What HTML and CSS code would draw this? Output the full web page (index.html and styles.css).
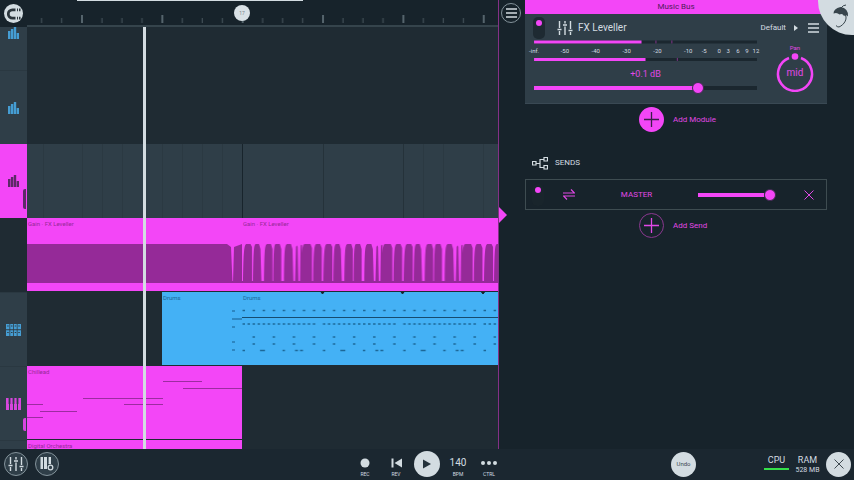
FILE: index.html
```html
<!DOCTYPE html>
<html lang="en">
    <head>
        <meta charset="UTF-8">
        <meta name="viewport" content="width=device-width, initial-scale=1.0">
        <title>Music Bus</title>
        <link rel="stylesheet" href="styles.css">
    </head>
    <body>
        <!-- Shapes used more than once -->
        <svg class="defs" aria-hidden="true">
            <symbol id="levels" viewBox="0 0 11 12">
                <path d="M0 4h2.400v8H0zM2.900 2h2.400v10H2.900zM5.800 0h2.400v12H5.800zM8.700 6H11v6H8.700z"/>
            </symbol>
            <symbol id="faders" viewBox="0 0 16 14">
                <path d="M2.500 0v7M2.500 10v4M8 0v2.500M8 5.500V14M13.500 0v8M13.500 11v3M0.500 8.500h4M6 4h4M11.500 9.500h4" fill="none" stroke="currentColor" stroke-width="1.400"/>
            </symbol>
            <symbol id="menu" viewBox="0 0 11 10">
                <path d="M0 1h11M0 5h11M0 9h11" stroke="currentColor" stroke-width="1.400"/>
            </symbol>
            <symbol id="plus" viewBox="0 0 15 15">
                <path d="M7.500 0v15M0 7.500h15" stroke="currentColor" stroke-width="1.300"/>
            </symbol>
            <symbol id="cross" viewBox="0 0 10 10">
                <path d="M0.500 0.500l9 9M9.500 0.500l-9 9" stroke="currentColor"/>
            </symbol>
        </svg>

        <div class="app">
            <main class="playlist">
                <div class="ruler">
                    <button type="button" class="snap" aria-label="Snap">
                        <svg width="14" height="12" viewBox="0 0 14 12">
                            <path d="M8.500 1.800H5.500a4.200 4.200 0 0 0 0 8.400h3" fill="none" stroke="#2b353c" stroke-width="2.800"/>
                            <path d="M10 .4h1v2.800h-1zM10 8.800h1v2.800h-1zM12 .4h1.500v2.800H12zM12 8.800h1.500v2.800H12z" fill="#2b353c"/>
                        </svg>
                    </button>
                    <svg class="ticks" height="27">
                        <defs>
                            <pattern id="bars" x="54" width="80.350" height="27" patternUnits="userSpaceOnUse">
                                <path d="M1 15v8" stroke="#55646c" stroke-width="2"/>
                                <path d="M21 18v5M41 18v5M61 18v5" stroke="#3d4b53" stroke-width="1.300"/>
                            </pattern>
                        </defs>
                        <rect width="100%" height="27" fill="url(#bars)"/>
                    </svg>
                    <span class="scroll"></span>
                    <span class="marker">17</span>
                </div>

                <div class="tracks">
                    <div class="track first">
                        <div class="head blue"><svg width="11" height="12"><use href="#levels"/></svg></div>
                        <div class="lane"></div>
                    </div>
                    <div class="track">
                        <div class="head blue"><svg width="11" height="12"><use href="#levels"/></svg></div>
                        <div class="lane"></div>
                    </div>
                    <div class="track">
                        <div class="head selected">
                            <svg width="11" height="12"><use href="#levels"/></svg>
                            <span class="peak"></span>
                        </div>
                        <div class="lane light">
                            <svg width="100%" height="74">
                                <path d="M16.500 0v74M55.500 0v74M75.500 0v74M95.500 0v74M135.500 0v74M155.500 0v74M175.500 0v74M195.500 0v74M396.500 0v74M416.500 0v74M456.500 0v74" stroke="#2b3942"/>
                                <path d="M296.500 0v74M376.500 0v74" stroke="#25323a"/>
                                <path d="M215.500 0v74" stroke="#18242c"/>
                            </svg>
                        </div>
                    </div>
                    <div class="track">
                        <div class="head empty"></div>
                        <div class="lane">
                            <div class="clip pink wide">
                                <span>Gain · FX Leveller</span>
                                <svg width="100%" height="39">
                                    <path d="M0 0h200l4 3 1.500 36H0zM206 39l1-36 8-3v39z"/>
                                    <path d="M0 37h216v2H0z"/>
                                </svg>
                            </div>
                            <div class="clip pink rest">
                                <span>Gain · FX Leveller</span>
                                <svg width="100%" height="39">
                                    <defs>
                                        <pattern id="duck" width="80.350" height="39" patternUnits="userSpaceOnUse">
                                            <path d="M1 39C1.500 8 2 0 4.500 0h4L10 3v36zM11 39c.5-31 .5-39 3-39h3l1.500 5 1 34zM22 39c.5-31 .5-38 3-39h4l1.500 5v34zM31.300 39c.3-31 .5-39 2.500-39h4l1.500 5v34zM42 39c.3-31 .5-38 3-39h4l1.500 5 1 34zM53 39l1-36q1-3 1.700 0l.8 36zM58 39l.5-36q.2-3 1.500-2l-.5 38zM59 39c.5-31 1-38 3.500-39h6l1.500 4v35zM71.200 39c.3-31 .8-38 3-39h4l1.600 4v35z"/>
                                            <path d="M0 37h81v2H0z"/>
                                        </pattern>
                                    </defs>
                                    <rect width="100%" height="39" fill="url(#duck)"/>
                                </svg>
                            </div>
                        </div>
                    </div>
                    <div class="track">
                        <div class="head blue">
                            <svg width="15" height="12" viewBox="0 0 15 12">
                                <path d="M0 0h15v5.300H0zM0 6.300h15V12H0z"/>
                                <path d="M3.800 0v12M7.500 0v12M11.200 0v12" stroke="#2f3e48" stroke-width=".8"/>
                                <path d="M1.200 2h1.500M5 2h1.500M8.700 2h1.500M12.300 2h1.500M1.200 8.500h1.500M5 8.500h1.500M8.700 8.500h1.500M12.300 8.500h1.500" stroke="#2f3e48" stroke-width="1"/>
                            </svg>
                        </div>
                        <div class="lane">
                            <div class="clip azure bar4">
                                <span>Drums</span>
                                <svg width="80" height="73">
                                    <path d="M70 19h3M70 27h10M70 35h3M70 50h3M70 58h3" stroke="#175d8d"/>
                                </svg>
                            </div>
                            <div class="clip azure rest">
                                <span>Drums</span>
                                <svg width="100%" height="73">
                                    <defs>
                                        <pattern id="beat" width="80.350" height="73" patternUnits="userSpaceOnUse">
                                            <g stroke="#1c6797" stroke-width="1.300">
                                                <path d="M.5 18.500H80" stroke-dasharray="2.500 7.550"/>
                                                <path d="M.5 32H74" stroke-dasharray="2.500 2.520"/>
                                                <path d="M10.500 45H80" stroke-dasharray="2.500 17.600"/>
                                                <path d="M10.500 52H80" stroke-dasharray="2.500 17.600"/>
                                                <path d="M.5 58.500H3M18 58.500h5M40.500 58.500H43M53 58.500h3M58 58.500h3"/>
                                            </g>
                                        </pattern>
                                    </defs>
                                    <rect width="100%" height="73" fill="url(#beat)"/>
                                    <path d="M0 25.500h2000" stroke="#164c70"/>
                                    <path d="M79 0h3l-1.500 2zM159 0h3l-1.500 2zM239.500 0h3l-1.500 2z" fill="#17232b" stroke="#17232b"/>
                                </svg>
                            </div>
                        </div>
                    </div>
                    <div class="track">
                        <div class="head rose">
                            <svg width="15" height="12" viewBox="0 0 15 12">
                                <path d="M0 0h3v12H0zM4 0h3v12H4zM8 0h3v12H8zM12 0h3v12h-3z"/>
                                <path d="M3.500 0v6M7.500 0v6M11.500 0v6" stroke="#2f3e48" stroke-width="1.800"/>
                            </svg>
                            <span class="peak"></span>
                        </div>
                        <div class="lane">
                            <div class="clip pink wide">
                                <span>Chillead</span>
                                <svg width="215" height="73">
                                    <path d="M136 15.500h39M156 22.500h59M56 32.500h80M0 38.500h16M97 38.500h39M13 45.500h37M0 51.500h16" stroke="#9c2ca0"/>
                                </svg>
                            </div>
                        </div>
                    </div>
                    <div class="track last">
                        <div class="head"></div>
                        <div class="lane">
                            <div class="clip pink wide"><span>Digital Orchestra</span></div>
                        </div>
                    </div>
                    <span class="playhead"></span>
                </div>
            </main>

            <aside class="mixer">
                <span class="pointer"></span>
                <div class="side">
                    <button type="button" class="round outline small" aria-label="Menu"><svg width="11" height="10"><use href="#menu"/></svg></button>
                </div>

                <div class="rack">
                    <h1>Music Bus</h1>
                    <section class="module">
                        <div class="title">
                            <button type="button" class="toggle" aria-label="Bypass"></button>
                            <svg width="16" height="14"><use href="#faders"/></svg>
                            <h2>FX Leveller</h2>
                            <button type="button" class="preset">Default
                                <svg width="4" height="6" viewBox="0 0 4 6"><path d="M0 0l4 3-4 3z"/></svg>
                            </button>
                            <button type="button" aria-label="Module menu"><svg width="11" height="10"><use href="#menu"/></svg></button>
                        </div>
                        <div class="controls">
                            <div class="level">
                                <svg class="meter" viewBox="0 0 224 22">
                                    <path d="M0 2h224M0 19.500h224" stroke="#1b272f" stroke-width="3"/>
                                    <path d="M0 2h108M0 19.500h112" stroke="#f346f7" stroke-width="3"/>
                                    <path d="M122.500 0.500v3M138.500 .5v3M144 18v3" stroke="#84348a"/>
                                    <g text-anchor="middle">
                                        <text x="0" y="13">-inf.</text>
                                        <text x="31" y="13">-50</text>
                                        <text x="62" y="13">-40</text>
                                        <text x="93" y="13">-30</text>
                                        <text x="124" y="13">-20</text>
                                        <text x="155" y="13">-10</text>
                                        <text x="171" y="13">-5</text>
                                        <text x="186" y="13">0</text>
                                        <text x="195" y="13">3</text>
                                        <text x="205" y="13">6</text>
                                        <text x="214" y="13">9</text>
                                        <text x="223" y="13">12</text>
                                    </g>
                                </svg>
                                <label for="gain">+0.1 dB</label>
                                <input type="range" id="gain" class="gain" min="0" max="100" value="75">
                            </div>
                            <div class="pan">
                                <span>Pan</span>
                                <button type="button" aria-label="Pan mid">
                                    <svg width="38" height="40" viewBox="0 0 38 40">
                                        <path d="M25 6A17 17 0 1 1 13 6" fill="none" stroke="#f346f7" stroke-width="2.500"/>
                                        <circle cx="19" cy="4.500" r="3.300" fill="#f346f7"/>
                                        <text x="19" y="24" text-anchor="middle">mid</text>
                                    </svg>
                                </button>
                            </div>
                        </div>
                    </section>

                    <button type="button" class="add">
                        <span class="round filled"><svg width="15" height="15"><use href="#plus"/></svg></span>Add Module
                    </button>

                    <h3>
                        <svg width="16" height="13" viewBox="0 0 16 13">
                            <path d="M.5 4.500h3.500v3.500H.5zM4 6.500h4M12 2.500H8v8h4M12 .5h3.500V4H12zM12 8.500h3.500V12H12z" fill="none" stroke="currentColor" stroke-width="1.200"/>
                        </svg>
                        SENDS
                    </h3>
                    <div class="send">
                        <button type="button" class="toggle off" aria-label="Send on"></button>
                        <svg width="12" height="11" viewBox="0 0 12 11">
                            <path d="M0 4h11.500L8 .5M12 7H.5L4 10.500" fill="none" stroke="currentColor" stroke-width="1.200"/>
                        </svg>
                        <label for="master">MASTER</label>
                        <input type="range" id="master" class="amount" min="0" max="100" value="100">
                        <button type="button" aria-label="Remove send"><svg width="10" height="10"><use href="#cross"/></svg></button>
                    </div>
                    <button type="button" class="add">
                        <span class="round ring"><svg width="15" height="15"><use href="#plus"/></svg></span>Add Send
                    </button>
                </div>
                <svg class="umbrella" width="36" height="35" viewBox="0 0 36 35">
                    <circle cx="34" cy="1" r="34" fill="#d3dce1"/>
                    <path d="M15.500 13.500q0-5 7-6.500 8 1 7.500 9.500-2-2-4-.5-1.500-3-4.500-1.500-2.500-2.500-6-1z" fill="#38454c"/>
                    <path d="M28 5q-3 0-5 3M26 13c5 5 0 12-5 14q-2 0-3-1.500" fill="none" stroke="#38454c"/>
                </svg>
            </aside>

            <footer>
                <div class="views">
                    <button type="button" class="round outline" aria-label="Mixer"><svg width="16" height="14"><use href="#faders"/></svg></button>
                    <button type="button" class="round outline" aria-label="Instruments">
                        <svg width="14" height="14" viewBox="0 0 14 14">
                            <path d="M.5 0h2.500v12H.5zM4 0h3v12H4zM8.500 0H11v7H8.500z" fill="#d3dce1"/>
                            <path d="M3.500 0v7M7.700 0v6" stroke="#2f3e48" stroke-width="1"/>
                            <circle cx="10.500" cy="10.500" r="3.500" fill="#2f3e48"/>
                            <circle cx="10.500" cy="10.500" r="2.300" fill="none" stroke="#d3dce1" stroke-width="1.300"/>
                        </svg>
                    </button>
                </div>
                <div class="transport">
                    <button type="button">
                        <svg width="10" height="10" viewBox="0 0 10 10"><circle cx="5" cy="5" r="4.500"/></svg>
                        <small>REC</small>
                    </button>
                    <button type="button">
                        <svg width="11" height="10" viewBox="0 0 11 10"><path d="M.5 .5H2.500v9H.5zM11 .5v9L3.500 5z"/></svg>
                        <small>REV</small>
                    </button>
                    <button type="button" class="round play" aria-label="Play">
                        <svg width="8" height="10" viewBox="0 0 8 10"><path d="M0 0.500l8 4.500-8 4.500z"/></svg>
                    </button>
                    <button type="button">
                        <b>140</b>
                        <small>BPM</small>
                    </button>
                    <button type="button">
                        <svg width="16" height="10" viewBox="0 0 16 10"><circle cx="2" cy="5" r="2"/><circle cx="8" cy="5" r="2"/><circle cx="14" cy="5" r="2"/></svg>
                        <small>CTRL</small>
                    </button>
                </div>
                <div class="status">
                    <button type="button" class="round undo">Undo</button>
                    <div class="stat">CPU<span class="load"></span></div>
                    <div class="stat">RAM<span>528 MB</span></div>
                    <button type="button" class="round undo" aria-label="Close"><svg width="10" height="10"><use href="#cross"/></svg></button>
                </div>
            </footer>
        </div>
    </body>
</html>
```
FILE: styles.css
```css
* {
    margin: 0;
    padding: 0;
    box-sizing: border-box;
}
body {
    background-color: #17232b;
    color: #d3dce1;
    font-family: Roboto, "Liberation Sans", sans-serif;
    font-size: 8px;
    line-height: 10px;
    overflow: hidden;
}
button {
    border: none;
    background: none;
    color: inherit;
    font: inherit;
}
svg {
    display: block;
    fill: currentColor;
}
.defs {
    display: none;
}
.app {
    display: grid;
    grid-template-columns: minmax(0, 1fr) 356px;
    grid-template-rows: minmax(0, 1fr) 31px;
    height: 100vh;
}
.round {
    display: flex;
    flex: none;
    align-items: center;
    justify-content: center;
    width: 25px;
    height: 25px;
    border-radius: 50%;
}
.outline {
    width: 24px;
    height: 24px;
    border: 1px solid #83929a;
    background-color: #2f3e48;
}
.small {
    width: 20px;
    height: 20px;
    background: none;
}

/* Playlist */
.playlist {
    display: flex;
    flex-direction: column;
    overflow: hidden;
}
.ruler {
    position: relative;
    display: flex;
    flex: none;
    height: 27px;
}
.snap {
    display: flex;
    flex: none;
    align-items: center;
    justify-content: center;
    width: 19px;
    height: 19px;
    margin: 4px;
    border-radius: 50%;
    background-color: #d3dce1;
}
.ticks {
    flex: 1;
    min-width: 0;
    border-bottom: 2px solid #35444c;
}
.scroll {
    position: absolute;
    top: 0;
    left: 77px;
    width: 226px;
    height: 1px;
    background-color: #d3dce1;
}
.marker {
    position: absolute;
    top: 5px;
    left: 234px;
    width: 16px;
    height: 16px;
    border-radius: 50%;
    background-color: #d9e1e6;
    color: #7b868c;
    font-size: 5px;
    line-height: 16px;
    text-align: center;
}
.tracks {
    position: relative;
    flex: 1;
    min-height: 0;
    overflow: hidden;
    background-color: #1f2b33;
}
.track {
    display: flex;
    height: 74px;
}
.first {
    height: 43px;
}
.first .head {
    align-items: flex-start;
    border-top: none;
}
.head {
    position: relative;
    display: flex;
    flex: none;
    align-items: center;
    justify-content: center;
    width: 27px;
    border-top: 1px solid #2a3841;
    background-color: #2f3e48;
}
.blue {
    color: #459dd3;
}
.rose {
    color: #d746de;
}
.selected {
    border-top: none;
    background-color: #f346f7;
    color: #5c2a67;
}
.empty {
    border-top: none;
    background-color: #1f2b33;
}
.peak {
    position: absolute;
    right: 1px;
    bottom: 9px;
    width: 3px;
    height: 20px;
    border-radius: 2px 0 0 2px;
    background-color: currentColor;
}
.rose .peak {
    height: 13px;
}
.lane {
    display: flex;
    flex: 1;
    min-width: 0;
}
.light {
    background-color: #2f3e48;
}
.clip {
    position: relative;
    flex: none;
    height: 73px;
    overflow: hidden;
}
.clip span {
    position: absolute;
    top: 1px;
    left: 1px;
    font-size: 6px;
}
.wide {
    width: 215px;
}
.bar4 {
    width: 80px;
    margin-left: 135px;
}
.rest {
    flex: 1;
}
.pink {
    background-color: #f346f7;
    color: #952a98;
}
.pink [height="39"] {
    margin-top: 26px;
}
.azure {
    background-color: #44b1f5;
    color: #1c6797;
}
.playhead {
    position: absolute;
    top: 0;
    left: 143px;
    width: 3px;
    height: 100%;
    background-color: #d3dce1;
}

/* Mixer */
.mixer {
    position: relative;
    display: flex;
    padding-right: 27px;
    border-left: 1px solid #843087;
}
.pointer {
    position: absolute;
    top: 207px;
    left: 0;
    border: solid transparent;
    border-width: 8px 0 8px 8px;
    border-left-color: #f346f7;
}
.side {
    width: 26px;
    padding: 3px 2px;
}
.rack {
    flex: 1;
    min-width: 0;
}
h1, h2, h3 {
    font: inherit;
}
h1 {
    height: 14px;
    background-color: #f346f7;
    color: #511b59;
    line-height: 13px;
    text-align: center;
}
.module {
    height: 90px;
    padding: 2px 8px 0;
    border-bottom: 1px solid #3a4954;
    background-color: #2f3e48;
}
.title {
    display: flex;
    align-items: center;
    height: 23px;
}
.toggle {
    width: 12px;
    height: 22px;
    margin-right: 12px;
    padding: 3px;
    border-radius: 5px;
    background-color: #1e2a32;
}
.toggle::before {
    content: "";
    display: block;
    width: 6px;
    height: 6px;
    margin-bottom: 10px;
    border-radius: 50%;
    background-color: #f346f7;
}
.off {
    background-color: #19252c;
}
h2 {
    margin-left: 5px;
    font-size: 10px;
}
.preset {
    display: flex;
    align-items: center;
    gap: 8px;
    margin-left: auto;
    margin-right: 10px;
}
.controls {
    display: flex;
    gap: 18px;
}
.level {
    display: flex;
    flex: 1;
    flex-direction: column;
    align-items: center;
    padding-left: 1px;
    color: #e148e6;
    font-size: 9px;
}
.meter {
    width: 100%;
    margin-top: 1px;
    overflow: visible;
    fill: #d3dce1;
    font-size: 6px;
}
.level label {
    margin-top: 7px;
}
input[type="range"] {
    appearance: none;
    height: 12px;
    background: linear-gradient(#1b272f, #1b272f) center / 100% 4px no-repeat;
}
input[type="range"]::-webkit-slider-thumb {
    appearance: none;
    width: 12px;
    height: 12px;
    border: 1px solid #3f2a50;
    border-radius: 50%;
    background-color: #f346f7;
}
input.gain {
    width: 100%;
    margin-top: 3px;
    background: linear-gradient(90deg, #f346f7 74%, #1b272f 74%) center / 100% 4px no-repeat;
}
input.amount {
    flex: none;
    width: 78px;
    background: linear-gradient(90deg, #f346f7 84%, transparent 84%) center / 100% 4px no-repeat;
}
.pan {
    width: 44px;
    padding-top: 4px;
    padding-right: 4px;
    color: #e148e6;
    font-size: 6px;
    text-align: center;
}
.pan span {
    display: block;
    height: 9px;
    line-height: 9px;
}
.pan button {
    font-size: 10px;
}
.add {
    display: flex;
    align-items: center;
    gap: 9px;
    height: 25px;
    margin: 3px 0 0 114px;
    color: #e148e6;
}
.filled {
    background-color: #f346f7;
    color: #3b1f49;
}
.ring {
    border: 1px solid #8a388f;
}
h3 {
    display: flex;
    align-items: center;
    gap: 7px;
    height: 20px;
    margin: 21px 0 6px 7px;
}
.send {
    display: flex;
    align-items: center;
    height: 31px;
    padding: 0 12px 0 6px;
    border: 1px solid #3e4c51;
    color: #e148e6;
}
.send .toggle {
    margin-right: 19px;
}
.send label {
    flex: 1;
    text-align: center;
}
.send button:last-child {
    margin-left: 28px;
}
.umbrella {
    position: absolute;
    top: 0;
    right: 0;
}

/* Bottom bar */
footer {
    grid-column: 1 / -1;
    display: grid;
    grid-template-columns: 1fr 155px 1fr;
    align-items: center;
    padding-bottom: 1px;
    background-color: #1b2730;
}
.views {
    display: flex;
    gap: 7px;
    padding-left: 4px;
}
.transport {
    display: grid;
    grid-template-columns: repeat(5, 1fr);
    align-items: center;
    justify-items: center;
}
.transport button {
    display: flex;
    flex-direction: column;
    align-items: center;
    gap: 2px;
    padding-top: 8px;
}
.transport small {
    font-size: 5px;
    line-height: 8px;
}
.transport b {
    font-size: 10px;
    font-weight: normal;
}
.transport .play {
    justify-content: center;
    width: 26px;
    height: 26px;
    padding: 0;
    background-color: #d3dce1;
    color: #25333c;
}
.status {
    display: flex;
    align-items: center;
    justify-content: flex-end;
    padding-right: 3px;
}
.stat {
    width: 31px;
    height: 20px;
    padding-top: 1px;
    font-size: 9px;
    line-height: 10px;
    text-align: center;
    white-space: nowrap;
}
.stat span {
    display: block;
    font-size: 7px;
}
.stat .load {
    height: 2px;
    margin: 3px;
    background-color: #35e04a;
}
.undo {
    background-color: #d3dce1;
    color: #3e4a51;
    font-size: 6px;
}
.undo:first-child {
    margin-right: 65px;
}
.undo:last-child {
    margin-left: 3px;
}
```
